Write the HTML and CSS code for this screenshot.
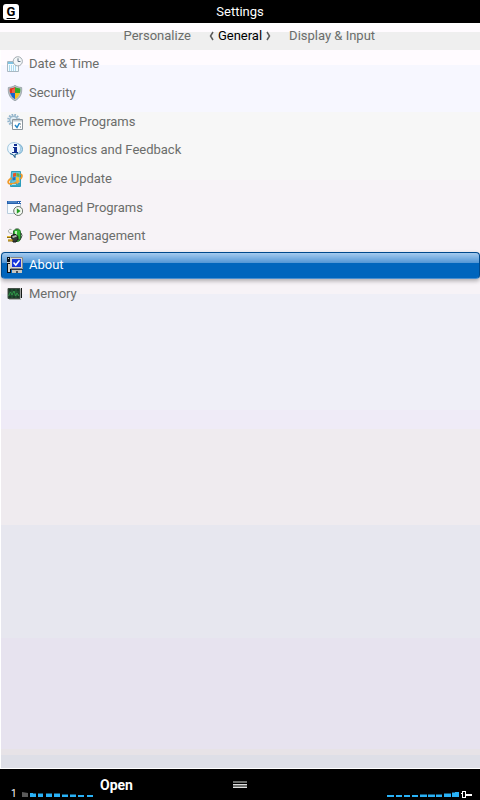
FILE: index.html
```html
<!DOCTYPE html>
<html lang="en">
<head>
    <meta charset="utf-8">
    <title>Settings</title>
    <meta name="viewport" content="width=device-width, initial-scale=1">
    <link rel="stylesheet" href="styles.css">
</head>
<body>
    <header class="title-bar">
        <span class="network">G</span>
        <h1>Settings</h1>
    </header>

    <nav class="tabs">
        <a class="tab-prev" href="#personalize">Personalize</a>
        <a class="tab-current" href="#general">
            <svg class="chevron" viewBox="0 0 5 12"><path d="M4 2L1.500 6L4 10" /></svg>
            <span>General</span>
            <svg class="chevron" viewBox="0 0 5 12"><path d="M1 2L3.500 6L1 10" /></svg>
        </a>
        <a class="tab-next" href="#display">Display &amp; Input</a>
    </nav>

    <main class="content">
        <ul class="settings-list">
            <li>
                <a class="item" href="#date">
                    <svg class="icon" viewBox="0 0 16 16">
                        <path d="M.5 5.500h11v10H.5z" fill="#f4fbff" stroke="#a9b8c2" />
                        <path d="M1 6h10v2H1z" fill="#7fc3e3" />
                        <path d="M2 10h8M2 12h8M2 14h8" stroke="#65b9df" stroke-dasharray="1 1" />
                        <circle cx="10.800" cy="5.300" r="4.600" fill="#f3f6f8" stroke="#a4acb2" />
                        <path d="M11 2.300v3.200h2.500" fill="none" stroke="#637584" />
                    </svg>
                    <span>Date &amp; Time</span>
                </a>
            </li>
            <li>
                <a class="item" href="#security">
                    <svg class="icon" viewBox="0 0 16 16">
                        <path d="M8 .3C6 1.800 4 2.200 1.300 2.500C.8 9.300 3 13.300 8 15.800C13 13.300 15.200 9.300 14.700 2.500C12 2.200 10 1.800 8 .3z" fill="#b8c2c6" stroke="#7d898e" stroke-width=".6" />
                        <path d="M8 2C6 3 4.600 3.300 2.700 3.500Q2.500 6 3 8H8z" fill="#e03421" />
                        <path d="M8 2C10 3 11.400 3.300 13.300 3.500Q13.500 6 13 8H8z" fill="#36a927" />
                        <path d="M3 8H8v6.200Q4.200 12 3 8z" fill="#1764cf" />
                        <path d="M13 8H8v6.200Q11.800 12 13 8z" fill="#f9c21c" />
                        <path d="M5 4.500L8 3v5H5z" fill="#ff8670" opacity=".55" />
                    </svg>
                    <span>Security</span>
                </a>
            </li>
            <li>
                <a class="item" href="#remove">
                    <svg class="icon" viewBox="0 0 16 16">
                        <circle cx="6.500" cy="6" r="5.300" fill="none" stroke="#8fb3cb" stroke-width="2" stroke-dasharray="1.600 1.200" />
                        <circle cx="6.500" cy="6" r="3.800" fill="#e1eef6" stroke="#9bb9cc" stroke-width="1.500" />
                        <path d="M5.500 5.500h10v10h-10z" fill="#fff" stroke="#8b969d" />
                        <path d="M6 6h9v1.500H6z" fill="#c3cbd0" />
                        <path d="M8 11l2 2.500L12.500 9" fill="none" stroke="#2486c6" stroke-width="1.500" />
                        <path d="M13 13h1M13 10h1" stroke="#65747d" />
                    </svg>
                    <span>Remove Programs</span>
                </a>
            </li>
            <li>
                <a class="item" href="#feedback">
                    <svg class="icon" viewBox="0 0 16 16">
                        <path d="M9 1.500Q15.500 2 15.500 7.500Q15 12 10 12" fill="#b8dcf0" stroke="#72aacb" />
                        <path d="M7 .6C3.200.6.6 3 .6 6.800C.6 9.800 2.500 11.800 5.500 12.500L8 15.500V12.600C11.500 12.200 13.500 10 13.500 6.800C13.500 3 10.800.6 7 .6z" fill="#eef8ff" stroke="#9cc4dc" />
                        <path d="M3 11.500Q5 12.500 6 12.500L8 15.500V12.500L11 11.500" fill="none" stroke="#25628d" />
                        <path d="M7 2h3v2H7zM6 5h4v5h1v1H5v-1h2V6H6z" fill="#102e91" />
                    </svg>
                    <span>Diagnostics and Feedback</span>
                </a>
            </li>
            <li>
                <a class="item" href="#update">
                    <svg class="icon" viewBox="0 0 16 16">
                        <path d="M4.500.5h9v15h-10z" fill="#66c5dd" stroke="#2c9cbb" />
                        <path d="M5 12h8v3H4.500z" fill="#35a5c4" />
                        <path d="M6 2.500l3-.8v3.500l-3 .7z" fill="#e95226" />
                        <path d="M9.500 2l3 .7v3.200l-3-.6z" fill="#73ae35" />
                        <path d="M5.500 6.500l3-.6v3l-3 .6z" fill="#246cb8" />
                        <path d="M9 6l3 .6v3l-3-.6z" fill="#f4c730" />
                        <path d="M4.500 7Q-.5 10.500 2 12.500Q5 14 10 11M13.500 3Q16.500 4 13.500 8" fill="none" stroke="#f09a2c" stroke-width="1.800" />
                        <path d="M9 8.500l4 1.500-3 3.500z" fill="#f5ab3e" />
                        <path d="M5 13.500h4" stroke="#a1e3ef" />
                    </svg>
                    <span>Device Update</span>
                </a>
            </li>
            <li>
                <a class="item" href="#managed">
                    <svg class="icon" viewBox="0 0 16 16">
                        <path d="M.5 1.500h13v12H.5z" fill="#f6fbff" stroke="#b9ccdc" />
                        <path d="M0 1h14v3H0z" fill="#245fae" />
                        <path d="M1 1.500h9v1H1z" fill="#6fa8dd" />
                        <path d="M11 2h1v1h-1zM13 2h1v1h-1z" fill="#fff" />
                        <circle cx="11.200" cy="11" r="4.500" fill="#f3f7f1" stroke="#687168" />
                        <path d="M9.800 8.200L13.600 11L9.800 13.800z" fill="#259d24" />
                    </svg>
                    <span>Managed Programs</span>
                </a>
            </li>
            <li>
                <a class="item" href="#power">
                    <svg class="icon" viewBox="0 0 16 16">
                        <path d="M8 1.500Q8 .5 10 .5Q12 .5 12.500 1.500" fill="#e4ece2" stroke="#8c958b" />
                        <path d="M6.500 3Q7 1.500 10 1.500Q13.500 1.500 13.500 3.500V11Q13 13.500 10 13.500H6.500z" fill="#35b933" stroke="#23742a" />
                        <path d="M8 3h2v8H8z" fill="#c2f2bb" />
                        <path d="M14 5Q16 7 14 10.500Q12.500 12.500 11 11.500" fill="none" stroke="#3c443d" />
                        <path d="M5.500 5.500Q1 5.500 1.500 2.500Q2.500 .5 4.500 1.500" fill="none" stroke="#a0a6a0" />
                        <path d="M4 8Q7 5.500 9 6.500Q11.500 8 11 11L9 14H6z" fill="#343a36" stroke="#171b18" />
                        <path d="M5 8.500l4-1.500 1 1.500-4 1.500z" fill="#b3bab3" />
                        <path d="M0 9h4M1 12.500h5" stroke="#8a6c14" stroke-width="2" />
                        <path d="M0 8.500h4M1 12h4" stroke="#e5ba38" />
                    </svg>
                    <span>Power Management</span>
                </a>
            </li>
            <li>
                <a class="item selected" href="#about" aria-current="true">
                    <svg class="icon" viewBox="0 0 16 16">
                        <path d="M0 0h4v16H0z" fill="#0b1018" />
                        <path d="M1 1h1v1H1zM0 5h3v1H0zM1 7h2v8H1z" fill="#d2d2ca" />
                        <path d="M3 0h13v12H3z" fill="#d9d6cd" />
                        <path d="M3.500.5h12v11h-12" fill="none" stroke="#858889" />
                        <path d="M5 2h9v8H5z" fill="#1636dc" />
                        <path d="M6.500 5.500L8.800 8L12.500 3.300" fill="none" stroke="#fff" stroke-width="1.500" />
                        <path d="M4 12h12v1H4z" fill="#303642" />
                        <path d="M5 13h10v3H5z" fill="#c8c6bf" />
                        <path d="M9 14h2v2H9z" fill="#4b5059" />
                    </svg>
                    <span>About</span>
                </a>
            </li>
            <li>
                <a class="item" href="#memory">
                    <svg class="icon" viewBox="0 0 16 16">
                        <path d="M1 2.500h12v10H1z" fill="#183a24" stroke="#465048" />
                        <path d="M2 6h10M2 9h10M5 3v9M9 3v9" stroke="#28583a" />
                        <path d="M1.500 10L3.500 6L5 9L7 5L8.500 10L10 7L12 10" fill="none" stroke="#319849" />
                        <path d="M14 2h1v10h-1z" fill="#161a18" />
                        <path d="M2 13h12v1H2z" fill="#b2b6b2" />
                    </svg>
                    <span>Memory</span>
                </a>
            </li>
        </ul>
    </main>

    <footer class="soft-bar">
        <button class="soft-key" type="button">Open</button>
        <button class="menu-key" type="button" aria-label="Menu">
            <svg viewBox="0 0 14 7">
                <path d="M0 0h14v2H0zM0 4h14v2H0z" fill="#6b6d6b" />
                <path d="M0 3h14v1H0zM0 6h14v1H0z" fill="#dedede" />
            </svg>
        </button>
        <div class="signal">
            <span>1</span>
            <svg viewBox="0 0 72 8">
                <path d="M0 1l6 1v4H0z" fill="#5a5a5a" />
                <path d="M8 2h6v4H8zM16 2h5v4h-5zM24 2h6v4h-6zM32 2h6v4h-6zM40 3h6v3h-6zM48 3h6v3h-6zM56 4h6v2h-6zM65 4h6v2h-6z" fill="#29b2f7" />
                <path d="M11 2h3v1h-3zM16 2h5v1h-5zM24 2h6v1h-6zM32 2h6v1h-6zM40 3h6v1h-6zM48 3h6v1h-6z" fill="#145777" />
            </svg>
        </div>
        <div class="battery">
            <svg viewBox="0 0 86 8">
                <path d="M0 4h7v2H0zM9 4h6v2H9zM17 4h6v2h-6zM25 4h6v2h-6zM33 3h7v3h-7zM41 3h7v3h-7zM49 3h6v3h-6zM57 2h7v4h-7zM65 1h7v5h-7z" fill="#29b2f7" />
                <path d="M33 3h7v1h-7zM41 3h7v1h-7zM49 3h6v1h-6zM57 2h7v1h-7zM65 1h3v1h-3z" fill="#145777" />
                <path d="M75 0h4v7h-4zM74 2h1v1h-1zM79 3h6v2h-6z" fill="#fff" />
                <path d="M76 1h2v5h-2z" fill="#000" />
            </svg>
        </div>
    </footer>
</body>
</html>
```
FILE: styles.css
```css
* { box-sizing: border-box; }
body { display: flex; flex-direction: column; min-height: 100vh; margin: 0; background-color: #fff; color: #6b6d6b; font-family: Roboto, sans-serif; font-size: 13px; line-height: 20px; }
a { color: inherit; text-decoration: none; }
svg { display: block; }

.title-bar { display: grid; grid-template-columns: 1fr auto 1fr; align-items: center; height: 23px; padding: 0 3px; background-color: #000; color: #fff; }
.title-bar h1 { margin: 0; font-size: 13px; font-weight: normal; }
.network { width: 16px; height: 16px; border-radius: 3px; background-color: #fff; color: #000; font-weight: bold; line-height: 15px; text-align: center; text-decoration: underline; text-underline-offset: 2px; }

.tabs { display: grid; grid-template-columns: 1fr auto 1fr; gap: 18px; align-items: center; height: 27px; padding-bottom: 2px; background: linear-gradient(#fff, #fffbff 9px, #efefef 9px); }
.tab-prev { text-align: right; }
.tab-current { display: flex; align-items: center; gap: 4px; color: #000; }
.chevron { width: 5px; height: 12px; fill: none; stroke: #5a5a5a; stroke-width: 1.5; }

.content { flex: 1; margin: 0 0 1px 1px; background: linear-gradient(#fffbff 2.1%, #f7f7ff 2.1% 8.6%, #f7f7f7 8.6% 18.1%, #f7f3f7 18.1% 34%, #efeff7 34% 50.1%, #efebf7 50.1% 52.8%, #efebef 52.8% 66.2%, #e7e7ef 66.2% 81.9%, #e7e3ef 81.9% 97.4%, #e7e3e7 97.4% 98.2%, #dedfe7 98.2%); }
.settings-list { display: grid; grid-auto-rows: 1fr; min-height: 258px; margin: 0; padding: 0; list-style: none; }
.settings-list li { display: flex; }
.item { display: flex; flex: 1; align-items: center; gap: 6px; padding: 0 6px; }
.icon { width: 16px; height: 16px; }
.selected { margin-top: 1px; padding: 0 5px; border: 1px solid #00498c; border-bottom-color: #4a8ece; border-radius: 4px; background: linear-gradient(#a5cbef, #5296d6 10px, #0065bd 10px); box-shadow: 0 2px 4px rgba(0,0,0,0.3); color: #fff; }

.soft-bar { display: grid; grid-template-columns: 1fr auto 1fr; height: 31px; background-color: #000; color: #fff; }
button { padding: 0; border: 0; background: none; color: inherit; font: inherit; }
.soft-key { grid-area: 1 / 1; font-size: 14px; font-weight: bold; }
.menu-key { grid-area: 1 / 2; }
.menu-key svg { width: 14px; height: 7px; }
.signal, .battery { display: flex; align-items: flex-end; align-self: end; padding-bottom: 1px; }
.signal { grid-area: 1 / 1; justify-self: start; gap: 5px; padding-left: 11px; font-size: 10px; line-height: 10px; }
.signal svg { width: 72px; height: 8px; }
.battery { grid-area: 1 / 3; justify-self: end; padding-right: 7px; }
.battery svg { width: 86px; height: 8px; }
```
